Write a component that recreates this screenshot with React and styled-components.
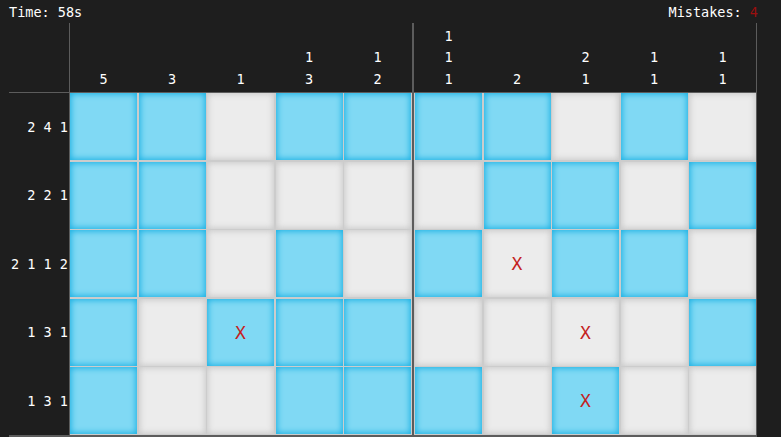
import React from 'react';
import styled, { createGlobalStyle } from 'styled-components';

const GlobalStyle = createGlobalStyle`
  html, body {
    margin: 0;
    padding: 0;
    background: #1e1e1e;
  }
  body {
    font-family: "DejaVu Sans Mono", "Liberation Mono", monospace;
    color: #ffffff;
  }
`;

const LINE = '#5c5c5c';
const GAP = '#cccccc';

const Page = styled.div`
  width: 781px;
  height: 437px;
  overflow: hidden;
  background: #1e1e1e;
`;

const TopBar = styled.div`
  height: 23px;
  display: flex;
  align-items: center;
  justify-content: space-between;
  padding: 0 23px 0 9px;
  font-size: 13.5px;
`;

const Mistakes = styled.span`
  color: #9b0f0f;
`;

const Board = styled.div`
  display: grid;
  grid-template-columns: 60px max-content max-content;
  justify-content: start;
  margin-left: 9px;
`;

const Corner = styled.div`
  border-bottom: 1px solid ${LINE};
`;

const ColHeader = styled.div`
  height: 69px;
  display: grid;
  grid-template-columns: repeat(5, 67px);
  column-gap: 1.5px;
  border-bottom: 1px solid ${LINE};
  border-left: ${p => (p.$first ? '1px' : '2px')} solid ${LINE};
  border-right: ${p => (p.$first ? '0' : `1px solid ${LINE}`)};
  padding: ${p => (p.$first ? '0 1px 0 0' : '0 0 0 1px')};
`;

const ColClue = styled.div`
  display: flex;
  flex-direction: column;
  justify-content: flex-end;
  align-items: center;
  padding-bottom: 2px;
  font-size: 13.5px;
  line-height: 21.5px;
`;

const RowClues = styled.div`
  display: grid;
  grid-template-rows: repeat(5, 67px);
  row-gap: 1.5px;
  padding-bottom: 1px;
  border-bottom: 2px solid ${LINE};
`;

const RowClue = styled.div`
  display: flex;
  align-items: center;
  justify-content: flex-end;
  padding-right: 1px;
  font-size: 13.5px;
  white-space: pre;
`;

const CellBlock = styled.div`
  display: grid;
  grid-template-columns: repeat(5, 67px);
  grid-template-rows: repeat(5, 67px);
  gap: 1.5px;
  background: ${GAP};
  border-bottom: 2px solid ${LINE};
  border-left: ${p => (p.$first ? '1px' : '2px')} solid ${LINE};
  border-right: ${p => (p.$first ? '0' : `1px solid ${LINE}`)};
  padding: ${p => (p.$first ? '0 1px 1px 0' : '0 0 1px 1px')};
`;

const Cell = styled.div`
  display: flex;
  align-items: center;
  justify-content: center;
  background: ${p => (p.$filled ? '#80d9f4' : '#ececec')};
  box-shadow: ${p =>
    p.$filled ? 'inset 0 0 6px 1px #16afe2' : 'inset 0 0 6px 1px #c8c8c8'};
  color: #c41f1f;
  font-size: 18px;
`;

const colClues = [[5], [3], [1], [1, 3], [1, 2], [1, 1, 1], [2], [2, 1], [1, 1], [1, 1]];
const rowClues = ['2 4 1', '2 2 1', '2 1 1 2', '1 3 1', '1 3 1'];
const grid = [
  '##.####.#.',
  '##....##.#',
  '##.#.#x##.',
  '#.X##..x.#',
  '#..###.X..',
];

function Block({ first }) {
  const offset = first ? 0 : 5;
  const cells = [];
  grid.forEach((row, r) => {
    for (let c = offset; c < offset + 5; c++) {
      const ch = row[c];
      cells.push(
        <Cell key={`${r}-${c}`} $filled={ch === '#' || ch === 'X'}>
          {ch === 'x' || ch === 'X' ? 'X' : null}
        </Cell>
      );
    }
  });
  return <CellBlock $first={first}>{cells}</CellBlock>;
}

function Header({ first }) {
  const clues = first ? colClues.slice(0, 5) : colClues.slice(5);
  return (
    <ColHeader $first={first}>
      {clues.map((nums, i) => (
        <ColClue key={i}>
          {nums.map((n, j) => (
            <span key={j}>{n}</span>
          ))}
        </ColClue>
      ))}
    </ColHeader>
  );
}

export default function App() {
  return (
    <Page>
      <GlobalStyle />
      <TopBar>
        <span>Time: 58s</span>
        <span>
          Mistakes: <Mistakes>4</Mistakes>
        </span>
      </TopBar>
      <Board>
        <Corner />
        <Header first />
        <Header />
        <RowClues>
          {rowClues.map((t, i) => (
            <RowClue key={i}>{t}</RowClue>
          ))}
        </RowClues>
        <Block first />
        <Block />
      </Board>
    </Page>
  );
}
